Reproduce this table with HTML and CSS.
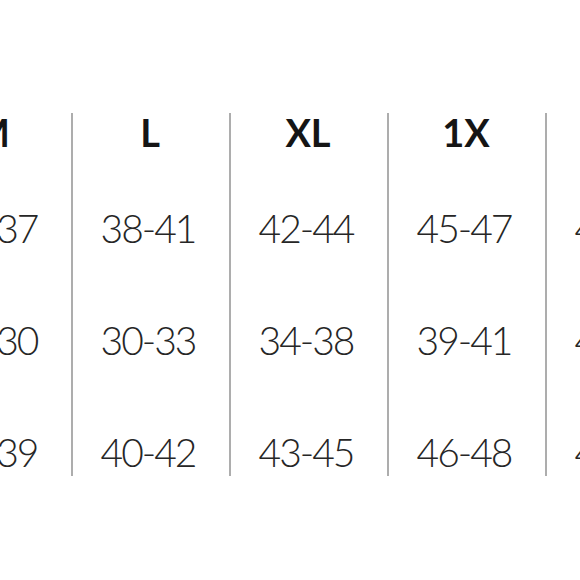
FILE: index.html
```html
<!DOCTYPE html>
<html>
<head>
<meta charset="utf-8">
<link rel="stylesheet" href="styles.css">
</head>
<body>
<div class="chart">
  <div class="col first">
    <div class="head">M</div>
    <div class="cell">34-37</div>
    <div class="cell">27-30</div>
    <div class="cell">36-39</div>
  </div>
  <div class="col">
    <div class="head">L</div>
    <div class="cell">38-41</div>
    <div class="cell">30-33</div>
    <div class="cell">40-42</div>
  </div>
  <div class="col">
    <div class="head">XL</div>
    <div class="cell">42-44</div>
    <div class="cell">34-38</div>
    <div class="cell">43-45</div>
  </div>
  <div class="col">
    <div class="head">1X</div>
    <div class="cell">45-47</div>
    <div class="cell">39-41</div>
    <div class="cell">46-48</div>
  </div>
  <div class="col">
    <div class="head">2X</div>
    <div class="cell">48-50</div>
    <div class="cell">42-44</div>
    <div class="cell">49-51</div>
  </div>
</div>
</body>
</html>
```
FILE: styles.css
```css
html, body {
  margin: 0;
  padding: 0;
  background: #fff;
  width: 580px;
  height: 580px;
  overflow: hidden;
}
.chart {
  display: flex;
  margin-left: -87px;
  margin-top: 113px;
}
.col {
  width: 158px;
  flex: 0 0 158px;
  height: 363px;
  box-sizing: border-box;
  border-left: 2px solid #adadad;
  display: flex;
  flex-direction: column;
  align-items: center;
  font-family: Lato, "Open Sans", sans-serif;
  padding-right: 2px;
}
.col.first {
  border-left: none;
  padding-left: 2px;
}
.head {
  height: 38px;
  line-height: 38px;
  font-size: 38px;
  font-weight: 700;
  color: #151515;
  margin-bottom: 57px;
}
.cell {
  height: 40px;
  line-height: 40px;
  font-size: 39px;
  font-weight: 300;
  color: #262626;
  letter-spacing: -2px;
  padding-right: 4px;
  margin-bottom: 72px;
}
.cell:last-child {
  margin-bottom: 0;
}
```
